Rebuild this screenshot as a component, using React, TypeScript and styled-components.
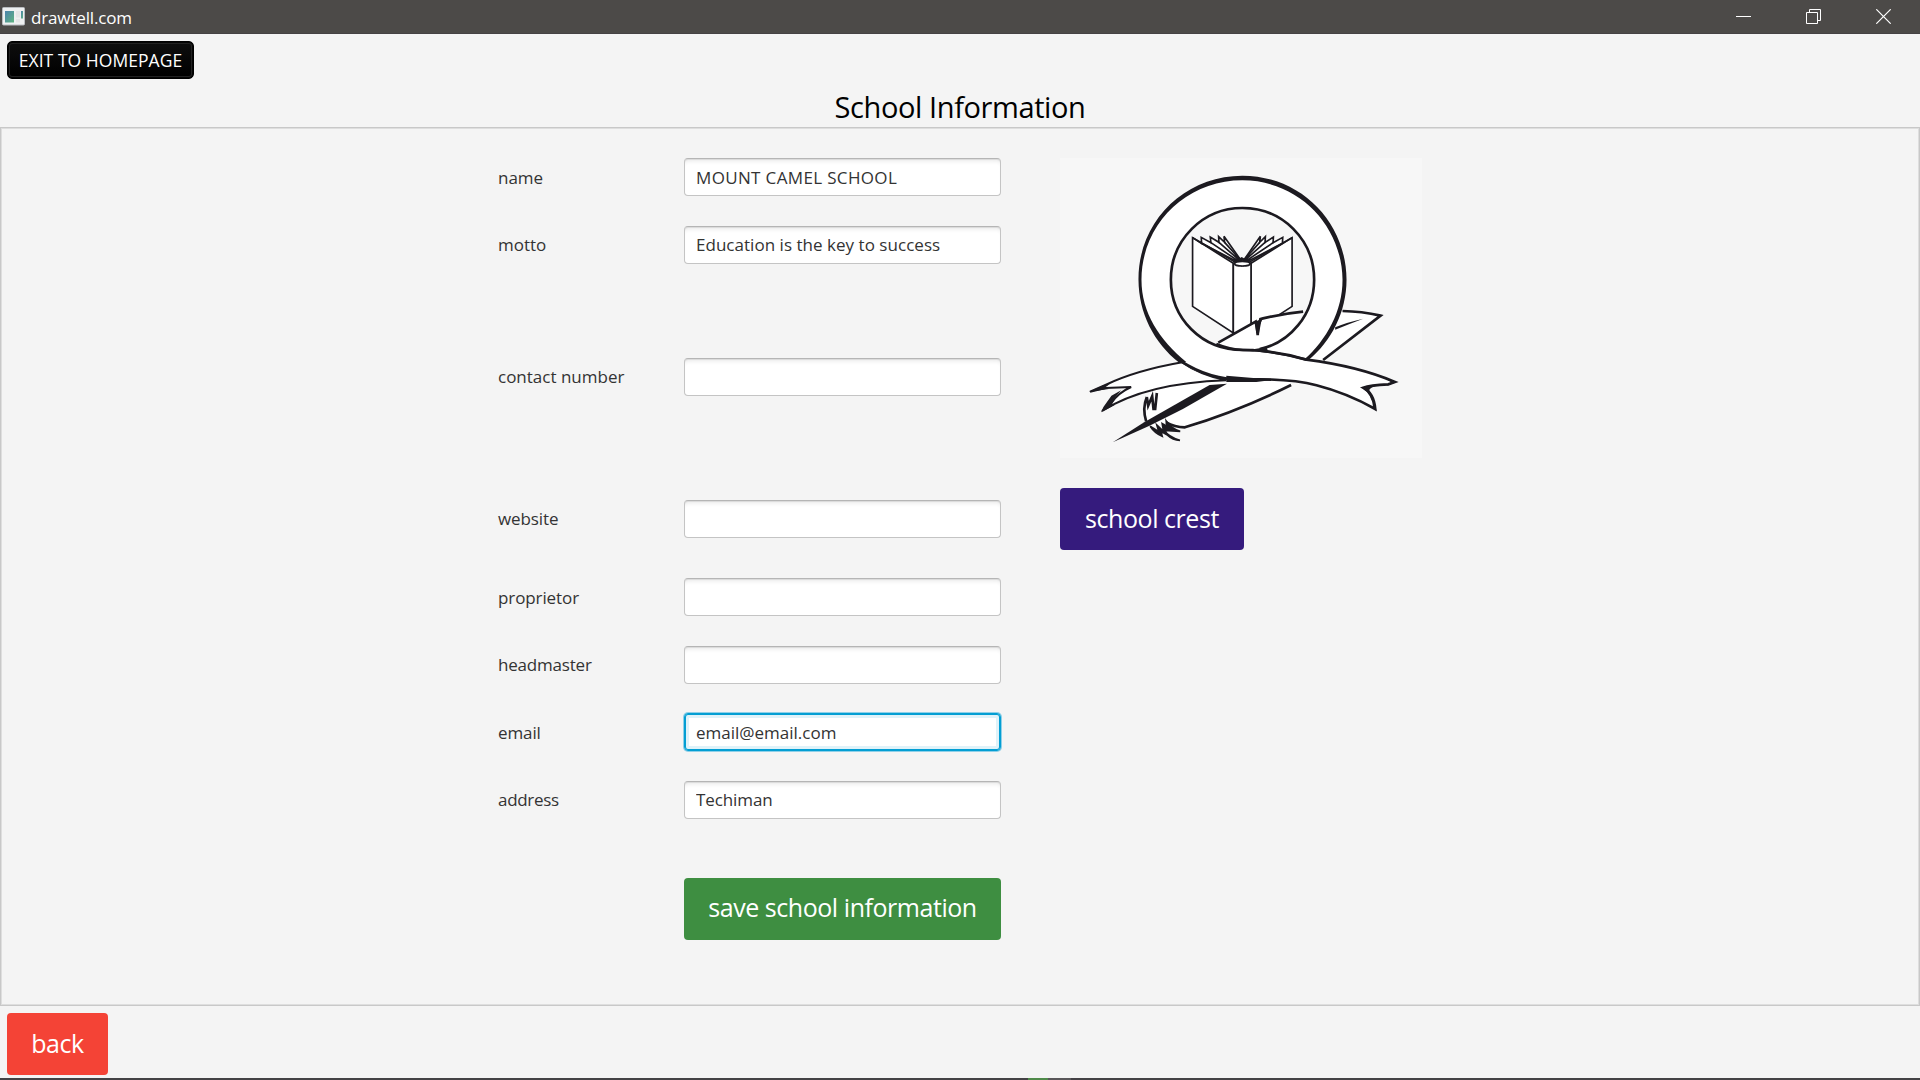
import React from 'react';
import styled, { createGlobalStyle } from 'styled-components';

const Global = createGlobalStyle`
  * { box-sizing: border-box; }
  html, body { margin: 0; padding: 0; }
  body { background: #f4f4f4; overflow: hidden; }
`;

const Window = styled.div`
  width: 1920px;
  height: 1080px;
  display: flex;
  flex-direction: column;
  background: #f4f4f4;
  color: #333;
  font-family: 'Open Sans', 'Noto Sans', sans-serif;
`;

const TitleBar = styled.header`
  height: 34px;
  flex: none;
  display: flex;
  align-items: center;
  background: #4c4a48;
  border-bottom: 1px solid #454244;
  color: #fff;
  padding: 0 2px;
`;

const AppTitle = styled.span`
  flex: 1;
  margin-left: 6px;
  padding-top: 2px;
  font-size: 17px;
  line-height: 24px;
  letter-spacing: -0.15px;
`;

const WindowControl = styled.div`
  width: 70px;
  height: 33px;
  display: flex;
  align-items: center;
  justify-content: center;
`;

const TopArea = styled.div`
  height: 93px;
  flex: none;
  display: flex;
  flex-direction: column;
  padding-top: 7px;
`;

const ExitButton = styled.button`
  align-self: flex-start;
  width: 187px;
  height: 38px;
  margin-left: 7px;
  padding: 0 0 1px;
  border: 1px solid #000;
  border-radius: 5px;
  background: linear-gradient(#0e0e0e, #000);
  box-shadow: inset 0 0 0 1px #050505, inset 0 0 0 2px #222;
  color: #fff;
  font: 17.5px 'Open Sans', sans-serif;
  letter-spacing: 0.05px;
  white-space: nowrap;
`;

const Heading = styled.h1`
  margin: 9px 0 0;
  text-align: center;
  color: #000;
  font-size: 29px;
  line-height: 38px;
  font-weight: 400;
  letter-spacing: -0.4px;
`;

const Panel = styled.main`
  height: 879px;
  flex: none;
  display: flex;
  align-items: flex-start;
  padding: 30px 0 0 497px;
  border: 1px solid #c8c8c8;
  box-shadow: inset 0 0 0 1px #dedede;
`;

const Form = styled.form`
  display: flex;
  flex-direction: column;
  width: 503px;
`;

const Row = styled.label<{ $gap?: number }>`
  display: flex;
  align-items: center;
  justify-content: space-between;
  height: 38px;
  margin-top: ${(p) => p.$gap ?? 0}px;
`;

const FieldLabel = styled.span<{ $ls?: number }>`
  padding-top: 1px;
  font-size: 17px;
  line-height: 24px;
  letter-spacing: ${(p) => p.$ls ?? 0}px;
`;

const Field = styled.input<{ $active?: boolean; $ls?: number }>`
  width: 317px;
  height: 38px;
  padding: 0 11px;
  border: 1px solid ${(p) => (p.$active ? '#039ed3' : '#c4c4c4')};
  border-top-color: ${(p) => (p.$active ? '#039ed3' : '#b5b5b5')};
  border-radius: 4px;
  outline: none;
  background: #fff;
  box-shadow: ${(p) =>
    p.$active
      ? '0 0 0 1px #8fd0e8, inset 0 0 0 1px #039ed3, inset 0 0 0 4px #dff2f9'
      : 'inset 0 1px 0 #dcdcdc, inset 0 5px 4px -3px #e8e8e8'};
  color: #333;
  font: 17px 'Open Sans', sans-serif;
  letter-spacing: ${(p) => p.$ls ?? 0}px;
`;

const BigButton = styled.button<{ $bg: string; $w: number }>`
  width: ${(p) => p.$w}px;
  height: 62px;
  padding: 0 0 3px;
  border: 0;
  border-radius: 4px;
  background: ${(p) => p.$bg};
  color: #fff;
  font: 25px 'Open Sans', sans-serif;
  letter-spacing: -0.45px;
  white-space: nowrap;
`;

const SaveSlot = styled.div`
  display: flex;
  justify-content: flex-end;
  margin-top: 59px;
`;

const CrestColumn = styled.section`
  display: flex;
  flex-direction: column;
  align-items: flex-start;
  gap: 30px;
  margin-left: 59px;
`;

const CrestImage = styled.svg`
  display: block;
  width: 362px;
  height: 300px;
  background: #f7f7f7;
`;

const Footer = styled.footer`
  height: 72px;
  flex: none;
  padding: 7px 0 0 7px;
`;

const TaskbarEdge = styled.div`
  height: 2px;
  display: flex;
  background: #444245;
  padding-left: 1028px;
`;

const Mark = styled.span<{ $w: number; $c: string }>`
  width: ${(p) => p.$w}px;
  background: ${(p) => p.$c};
`;

type FieldRow = { label: string; value?: string; gap?: number; active?: boolean; ls?: number; vls?: number };

const rows: FieldRow[] = [
  { label: 'name', value: 'MOUNT CAMEL SCHOOL', vls: 0.35 },
  { label: 'motto', value: 'Education is the key to success', gap: 29.5, vls: 0.03 },
  { label: 'contact number', gap: 94 },
  { label: 'website', gap: 104, ls: -0.1 },
  { label: 'proprietor', gap: 40.5, ls: -0.1 },
  { label: 'headmaster', gap: 29.5, ls: -0.2 },
  { label: 'email', gap: 29.5, active: true, value: 'email@email.com', ls: -0.1 },
  { label: 'address', gap: 29.5, value: 'Techiman', ls: -0.3, vls: -0.1 },
];

function AppIcon() {
  return (
    <svg width="23" height="19" viewBox="0 0 23 19">
      <defs>
        <linearGradient id="tile" x1="0" y1="0" x2="1" y2="1">
          <stop offset="0" stopColor="#4b83ad" />
          <stop offset="1" stopColor="#5fb380" />
        </linearGradient>
      </defs>
      <rect x="0.5" y="0.5" width="22" height="17.5" rx="1" fill="#eef0f1" stroke="#b9bcc0" />
      <rect x="3" y="4" width="9" height="11.5" fill="url(#tile)" />
      <rect x="14" y="4" width="4" height="6.5" fill="#e4e5e6" />
      <rect x="14" y="12" width="4" height="3.5" fill="#e4e5e6" />
      <rect x="19" y="4" width="2" height="7.5" fill="url(#tile)" />
    </svg>
  );
}

function Crest() {
  const ink = '#1c1a20';
  return (
    <CrestImage viewBox="32 25 1084 900" preserveAspectRatio="none">
      <g fill="#fff" stroke={ink} strokeWidth="8" strokeLinejoin="miter">
        {/* feather tail and body behind the ring */}
        <path stroke="none" d="M880 484L992 498L820 630L720 705Q580 780 406 833L350 818L300 835Q278 800 290 745L330 700L780 600Z" />
        <path fill="none" d="M878 484Q935 485 992 498L820 631" />
        <path fill={ink} stroke="none" d="M856 533Q890 518 940 507Q895 524 856 540Z" />
        <path fill="none" d="M724 706Q570 783 406 833Q375 832 350 818" />

        {/* ring band */}
        <path stroke="none" fillRule="evenodd" d="M578 82C410 82 270 212 270 390C270 550 390 690 530 690L775 630C845 570 887 490 887 390C887 215 750 82 578 82ZM578 175C455 175 364 270 364 390C364 510 455 601 580 601C700 601 794 505 794 390C794 270 700 175 578 175Z" />

        {/* book */}
        <g strokeWidth="5">
          <path d="M429 264L551 341V550L429 470Z" />
          <path d="M727 264L604 341V550L727 470Z" />
          <path d="M551 341H604V550H551Z" />
          <path d="M429 264L575 348L576 335L523 260L525 278L507 261L508 278L482 262L484 279L455 263L456 281Z" />
          <path d="M727 264L581 348L580 335L632 260L630 278L647 261L646 278L671 262L670 279L699 263L698 281Z" />
          <path fill="none" d="M456 281L570 340M484 279L572 338M508 278L574 336M525 278L575 334M698 281L585 340M670 279L583 338M646 278L581 336M630 278L580 334" />
          <ellipse cx="578" cy="342" rx="23" ry="7" />
        </g>
        <path fill={ink} stroke="none" d="M551 338L576 322L604 338Q578 328 551 338Z" />

        {/* feather body inside the ring */}
        <path stroke="none" d="M506 579L618 518L640 506Q700 492 760 486C730 550 680 601 580 601Q540 598 506 579Z" />
        <path fill="none" d="M506 579L618 516L624 550L632 508L640 506Q700 492 760 486" />
        <path fill={ink} stroke="none" d="M616 516L620 557H628L630 525L640 506Z" />

        {/* ribbon, left tail */}
        <path strokeWidth="6" d="M398 638Q260 662 168 706L122 726L168 715L245 712Q205 730 186 760L158 784Q290 700 530 692Q450 675 398 638Z" />
        <path fill={ink} stroke="none" d="M118 727L168 704L180 704L166 714L178 718ZM155 788L162 772L186 738L215 722L198 742L188 763L196 766Z" />

        {/* ribbon, right sweep */}
        <path stroke="none" d="M398 638C320 575 272 500 280 390L366 420C385 530 460 601 580 601Q680 602 770 630Q910 650 1035 697L940 714Q965 730 975 780Q830 700 690 691Q470 700 398 638Z" />

        {/* ring outlines, heavier toward the upper left, upper right and lower left */}
        <path fill={ink} stroke="none" fillRule="evenodd" d="M578 78C405 78 266 215 267 390C268 490 312 578 390 640L410 637C330 570 276 490 276 390C276 225 410 92 578 92C745 92 876 225 878 390C878 485 830 570 764 629L776 631C845 575 890 485 890 390C889 215 751 78 578 78Z" />
        <path fill="none" d="M612 601L580 601C455 601 364 505 364 390C364 270 460 175 578 175C698 175 793 270 793 390C793 495 720 580 630 598" />

        <path fill="none" d="M395 635Q480 690 580 690Q720 685 800 707Q890 730 976 778Q972 730 940 714Q960 706 1015 704L1035 697Q925 650 770 630Q680 602 580 601Q540 600 500 583" />
        <path fill={ink} stroke="none" d="M570 600Q620 600 650 591L654 602Q710 613 778 627L770 634Q680 608 570 602ZM530 678L620 686L690 688L620 697H530ZM1012 690L1040 698L1010 708L1024 698ZM935 714Q955 708 980 708Q958 714 958 722Q970 740 980 784L970 776Q968 735 935 714Z" />

        {/* quill shaft and barbs */}
        <path fill={ink} stroke="none" d="M190 878L284 818L480 706L532 702L400 778L300 828Z" />
        <path fill="none" strokeWidth="8" d="M292 742Q278 775 290 815M292 742L296 768L308 740L312 778H317L322 730" />
        <path fill={ink} strokeWidth="5" d="M302 830Q315 850 338 860L334 845L352 855Q370 872 391 872Q355 860 345 842L392 845Q370 840 350 814L352 830L338 822L342 845L322 826L328 846Z" />
      </g>
    </CrestImage>
  );
}

export default function App() {
  return (
    <Window>
      <Global />
      <TitleBar>
        <AppIcon />
        <AppTitle>drawtell.com</AppTitle>
        <WindowControl>
          <svg width="15" height="15"><path d="M0 7.5H15" stroke="#fff" /></svg>
        </WindowControl>
        <WindowControl>
          <svg width="15" height="15" fill="none" stroke="#fff"><path d="M.5 3.5H11.5V14.5H.5ZM3.5 3V.5H14.5V11.5H12" /></svg>
        </WindowControl>
        <WindowControl>
          <svg width="15" height="15"><path d="M.3 .3L14.7 14.7M14.7 .3L.3 14.7" stroke="#fff" strokeWidth="1.2" /></svg>
        </WindowControl>
      </TitleBar>
      <TopArea>
        <ExitButton>EXIT TO HOMEPAGE</ExitButton>
        <Heading>School Information</Heading>
      </TopArea>
      <Panel>
        <Form>
          {rows.map((r) => (
            <Row key={r.label} $gap={r.gap}>
              <FieldLabel $ls={r.ls}>{r.label}</FieldLabel>
              <Field type="text" defaultValue={r.value} $active={r.active} $ls={r.vls} />
            </Row>
          ))}
          <SaveSlot>
            <BigButton type="button" $bg="#3e8e41" $w={317}>save school information</BigButton>
          </SaveSlot>
        </Form>
        <CrestColumn>
          <Crest />
          <BigButton type="button" $bg="#351b7d" $w={184}>school crest</BigButton>
        </CrestColumn>
      </Panel>
      <Footer>
        <BigButton type="button" $bg="#f44336" $w={101}>back</BigButton>
      </Footer>
      <TaskbarEdge>
        <Mark $w={20} $c="#4f8a4a" />
        <Mark $w={23} $c="#595759" />
      </TaskbarEdge>
    </Window>
  );
}
